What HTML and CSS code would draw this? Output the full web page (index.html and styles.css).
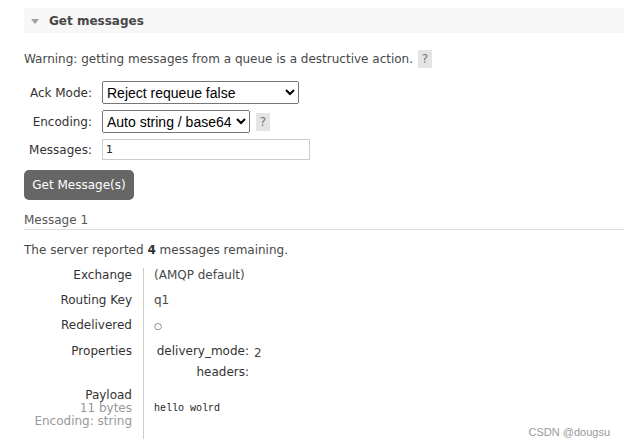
FILE: index.html
```html
<!DOCTYPE html>
<html>
<head>
<meta charset="utf-8">
<link rel="stylesheet" href="styles.css">
</head>
<body>
<div class="page">
  <div class="section-head"><span class="tri"></span><h2>Get messages</h2></div>
  <p class="warn">Warning: getting messages from a queue is a destructive action. <span class="help">?</span></p>
  <div class="form">
    <label class="flabel">Ack Mode:</label>
    <div class="fctl">
      <select class="sel sel-ack">
        <option>Nack message requeue true</option>
        <option>Automatic ack</option>
        <option>Reject requeue true</option>
        <option selected>Reject requeue false</option>
      </select>
    </div>
    <label class="flabel">Encoding:</label>
    <div class="fctl">
      <select class="sel sel-enc">
        <option selected>Auto string / base64</option>
        <option>base64</option>
      </select>
      <span class="help">?</span>
    </div>
    <label class="flabel">Messages:</label>
    <div class="fctl"><input class="inp" type="text" value="1"></div>
  </div>
  <button class="btn">Get Message(s)</button>
  <h3 class="msg-title">Message 1</h3>
  <p class="remain">The server reported <b>4</b> messages remaining.</p>
  <div class="facts">
    <div class="fk">Exchange</div><div class="fv">(AMQP default)</div>
    <div class="fk">Routing Key</div><div class="fv">q1</div>
    <div class="fk fk-redel">Redelivered</div><div class="fv fv-redel"><span class="circ">○</span></div>
    <div class="fk fk-props">Properties</div>
    <div class="fv fv-props">
      <div class="props">
        <div class="pk">delivery_mode:</div><div class="pv">2</div>
        <div class="pk">headers:</div><div class="pv"></div>
      </div>
    </div>
    <div class="fk fk-pay">Payload<span class="sub">11 bytes</span><span class="sub">Encoding: string</span></div>
    <div class="fv fv-pay"><pre class="payload">hello wolrd</pre></div>
  </div>
</div>
<div class="mark">CSDN @dougsu</div>
</body>
</html>
```

FILE: styles.css
```css
html, body {
  margin: 0;
  padding: 0;
  background: #fff;
}
body {
  font-family: "DejaVu Sans", Verdana, sans-serif;
  font-size: 12px;
  color: #484848;
  position: relative;
  height: 446px;
  overflow: hidden;
}
.page {
  padding: 8px 0 0 24px;
}
.section-head {
  display: flex;
  align-items: center;
  height: 25px;
  background: #f7f7f7;
}
.tri {
  width: 0;
  height: 0;
  margin: 1px 10px 0 7px;
  border-left: 4.5px solid transparent;
  border-right: 4.5px solid transparent;
  border-top: 5px solid #a0a0a0;
}
.section-head h2 {
  margin: 0;
  font-size: 12px;
  font-weight: bold;
  color: #484848;
}
.warn {
  margin: 17px 0 0;
  line-height: 18px;
  display: flex;
  align-items: center;
  gap: 5px;
}
.help {
  display: inline-block;
  width: 14px;
  height: 18px;
  line-height: 18px;
  text-align: center;
  background: #e4e4e4;
  color: #777;
  font-size: 12px;
}
.form {
  display: grid;
  grid-template-columns: 68px auto;
  column-gap: 10px;
  row-gap: 6px;
  align-items: center;
  margin-top: 13px;
  justify-content: start;
}
.flabel {
  text-align: right;
  color: #333;
  font-size: 12px;
}
.fctl {
  display: flex;
  align-items: center;
  gap: 6px;
}
.sel {
  font-family: "Liberation Sans", Arial, sans-serif;
  font-size: 14px;
  height: 23px;
  color: #000;
}
.sel-ack { width: 197px; }
.sel-enc { width: 148px; }
.inp {
  width: 208px;
  height: 21px;
  box-sizing: border-box;
  border: 1px solid #ccc;
  padding: 0 3px;
  font-family: "DejaVu Sans", sans-serif;
  font-size: 11px;
  color: #222;
  outline: none;
}
.btn {
  display: block;
  margin-top: 10px;
  width: 110px;
  height: 30px;
  border: 0;
  border-radius: 5px;
  background: #666;
  color: #fff;
  font-family: "DejaVu Sans", sans-serif;
  font-size: 12px;
  padding: 0;
}
.msg-title {
  margin: 12px 0 0;
  padding-bottom: 1px;
  border-bottom: 1px solid #ddd;
  font-size: 12px;
  font-weight: normal;
  color: #555;
  line-height: 16px;
}
.remain {
  margin: 12px 0 0;
  line-height: 16px;
}
.remain b { color: #333; }
.facts {
  display: grid;
  grid-template-columns: 119px auto;
  justify-content: start;
  margin-top: 10px;
}
.fk {
  text-align: right;
  color: #333;
  padding-right: 11px;
  line-height: 14px;
  padding-bottom: 11px;
}
.fv {
  border-left: 1px solid #ccc;
  padding-left: 10px;
  line-height: 14px;
  padding-bottom: 11px;
  min-width: 200px;
}
.fk-redel, .fv-redel { padding-bottom: 12px; }
.circ {
  display: inline-block;
  font-size: 9px;
  line-height: 12px;
  margin-top: 2px;
}
.props {
  display: grid;
  grid-template-columns: 94px auto;
  column-gap: 5px;
  row-gap: 5px;
  margin-left: 1px;
}
.pk { text-align: right; color: #333; }
.pv { color: #484848; padding-top: 2px; }
.fk-props, .fv-props { padding-bottom: 10px; }
.fk-pay {
  display: flex;
  flex-direction: column;
  align-items: flex-end;
  line-height: 13px;
  padding-bottom: 11px;
  white-space: nowrap;
}
.sub { color: #999; }
.fv-pay {
  display: flex;
  align-items: center;
}
.payload {
  margin: 0;
  font-family: "Liberation Mono", monospace;
  font-size: 10px;
  color: #222;
}
.mark {
  position: absolute;
  right: 14px;
  bottom: 8px;
  font-family: "Liberation Sans", Arial, sans-serif;
  font-size: 11px;
  color: #999;
}
```
